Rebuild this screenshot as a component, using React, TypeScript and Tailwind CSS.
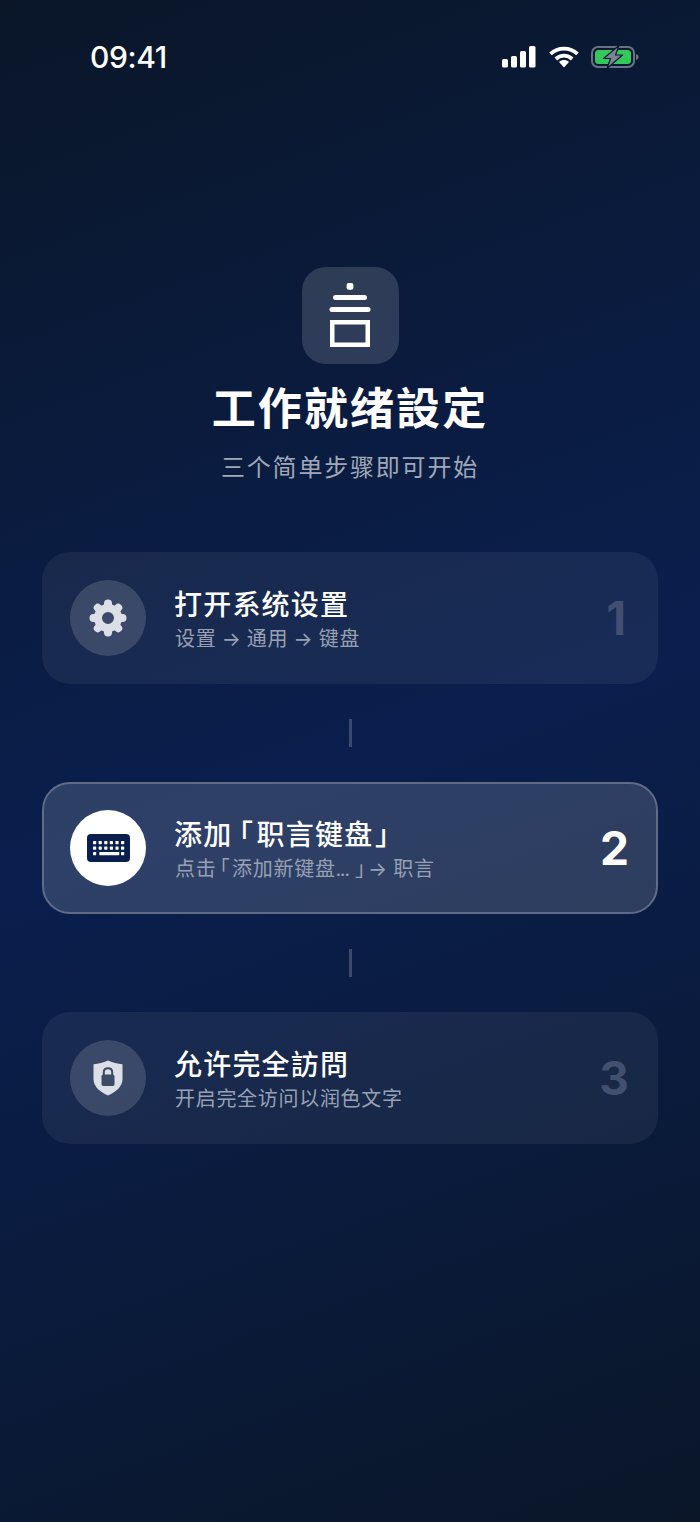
const SANS = "font-['Inter','Noto_Sans_CJK_SC',sans-serif]"

function StatusIcons() {
  return (
    <div className="flex items-center">
      <svg width="34" height="22" viewBox="0 0 34 22" fill="#fff">
        <rect x="0" y="13" width="6" height="8.5" rx="1.6" />
        <rect x="9" y="10" width="6" height="11.5" rx="1.6" />
        <rect x="18" y="5" width="6" height="16.5" rx="1.6" />
        <rect x="27" y="0" width="6.5" height="21.5" rx="1.6" />
      </svg>
      <svg className="ml-[13px]" width="30" height="22" viewBox="0 0 30 22" fill="none" stroke="#fff" strokeWidth="3.8">
        <path d="M1.500 7.800C9 .8 21 .8 28.500 7.800" />
        <path d="M6.800 13C11.500 8.600 18.500 8.600 23.200 13" />
        <path d="M10 16 15 21.500 20 16C17 13.400 13 13.400 10 16Z" fill="#fff" stroke="none" />
      </svg>
      <svg className="ml-[12px]" width="48" height="24" viewBox="0 0 48 24" fill="none">
        <rect x="1" y="2" width="42" height="20" rx="6" stroke="#6b7280" strokeWidth="2" />
        <rect x="4" y="5" width="36" height="14" rx="3.500" fill="#34c759" />
        <path d="M45 9c1.600.4 2.600 1.600 2.600 3s-1 2.600-2.600 3Z" fill="#6b7280" />
        <path d="M28 0.500 12.500 13.500h7L16 23.500 31.500 10h-7Z" fill="#7b8291" stroke="#0a1a38" strokeWidth="1.200" strokeLinejoin="round" />
      </svg>
    </div>
  )
}

function Logo() {
  return (
    <div className="w-[97px] h-[97px] rounded-[24px] bg-white/15 flex items-center justify-center">
      <svg width="42" height="66" viewBox="0 0 42 66" fill="#fff">
        <rect x="17.600" y="0" width="6.800" height="6.800" rx="2" />
        <rect x="4" y="12" width="34" height="5" rx="2.500" />
        <rect x="0.500" y="24" width="41" height="5" rx="2.500" />
        <path fillRule="evenodd" d="M1 37h40v27H1ZM5.500 41.500v18h31v-18Z" />
      </svg>
    </div>
  )
}

function GearIcon() {
  const angles = [0, 45, 90, 135, 180, 225, 270, 315]
  return (
    <svg width="38" height="38" viewBox="0 0 38 38" fill="none" stroke="#dcdfe6">
      <circle cx="19" cy="19" r="10" strokeWidth="8" />
      {angles.map((a) => (
        <line key={a} x1="19" y1="8" x2="19" y2="4.500" strokeWidth="8" strokeLinecap="round" transform={`rotate(${a} 19 19)`} />
      ))}
    </svg>
  )
}

function KeyboardIcon() {
  const rows = [7, 12.5]
  const cols = [6, 11.6, 17.2, 22.8, 28.4, 34]
  return (
    <svg width="43" height="28" viewBox="0 0 43 28" fill="#fff">
      <rect width="43" height="28" rx="4" fill="#0a1f4e" />
      {rows.flatMap((y) => cols.map((x) => <rect key={`${x}-${y}`} x={x} y={y} width="3.200" height="3.200" rx="0.6" />))}
      <rect x="6" y="18" width="3.200" height="3.200" rx="0.6" />
      <rect x="12.300" y="18" width="20" height="3.200" rx="0.6" />
      <rect x="34" y="18" width="3.200" height="3.200" rx="0.6" />
    </svg>
  )
}

function ShieldIcon() {
  return (
    <svg width="30" height="36" viewBox="0 0 30 36">
      <path d="M15 0.500C20 2.800 24.500 3.800 29.500 4.200V19C29.500 27 22 32.500 15 35.500 8 32.500 0.500 27 0.500 19V4.200C5.500 3.800 10 2.800 15 0.500Z" fill="#dcdfe6" />
      <rect x="8.500" y="14.500" width="13" height="11.500" rx="1.800" fill="#3c4967" />
      <path d="M10.800 15V12.200C10.800 9.700 12.600 8.200 15 8.200S19.200 9.700 19.200 12.200V15" fill="none" stroke="#3c4967" strokeWidth="2" />
    </svg>
  )
}

function Arrow() {
  return <span className="-mx-[1px]">→</span>
}

function StepCard({
  icon,
  title,
  sub,
  num,
  numClass,
  active,
}: {
  icon: React.ReactNode
  title: React.ReactNode
  sub: React.ReactNode
  num: string
  numClass?: string
  active?: boolean
}) {
  return (
    <div
      className={
        active
          ? "h-[132px] rounded-[28px] border-2 border-[#5f6b87] bg-white/15 flex items-center pl-[26px] pr-[27px]"
          : "h-[132px] rounded-[28px] border-2 border-transparent bg-white/[0.06] flex items-center pl-[26px] pr-[27px]"
      }
    >
      <div
        className={
          active
            ? "w-[76px] h-[76px] rounded-full bg-white flex items-center justify-center"
            : "w-[76px] h-[76px] rounded-full bg-white/15 flex items-center justify-center"
        }
      >
        {icon}
      </div>
      <div className="ml-[28px] pt-[3px] flex-1">
        <div className="text-[28px] leading-[36px] font-medium text-white tracking-[1.2px]">{title}</div>
        <div className="mt-[3px] ml-[1px] text-[20px] leading-[26px] text-[#98a1b3] tracking-[0.7px]">{sub}</div>
      </div>
      <div className={`text-[46px] font-bold ${active ? "text-white" : "text-[#414f70]"} ${numClass ?? ""}`}>{num}</div>
    </div>
  )
}

function Connector() {
  return <div className="w-[3px] h-[28px] bg-white/20 mx-auto my-[35px]" />
}

export default function App() {
  return (
    <div className={`${SANS} w-[700px] h-[1522px] overflow-hidden bg-[linear-gradient(160deg,#0a1628_0%,#0a1f4e_50%,#0a1628_100%)]`}>
      <div className="h-[114px] pl-[90px] pr-[61px] flex items-center justify-between">
        <span className="text-[30px] font-medium text-white tracking-[-0.4px]">09:41</span>
        <StatusIcons />
      </div>

      <div className="mt-[153px] flex flex-col items-center">
        <Logo />
        <h1 className="mt-[16px] text-[44px] leading-[58px] font-bold text-white tracking-[2.1px]">工作就绪設定</h1>
        <p className="mt-[14px] text-[24px] leading-[32px] text-[#a0a8b8] tracking-[1.8px]">三个简单步骤即可开始</p>
      </div>

      <div className="mt-[68px] px-[42px]">
        <StepCard
          icon={<GearIcon />}
          title="打开系统设置"
          sub={
            <>
              设置 <Arrow /> 通用 <Arrow /> 键盘
            </>
          }
          num="1"
          numClass="mr-[3px]"
        />
        <Connector />
        <StepCard
          icon={<KeyboardIcon />}
          title={
            <>
              添加
              <span className="[font-feature-settings:'palt'] ml-[6px] mr-[3px]">「</span>
              职言键盘
              <span className="[font-feature-settings:'palt'] ml-[2px]">」</span>
            </>
          }
          sub={
            <>
              点击
              <span className="[font-feature-settings:'palt'] ml-[3px] mr-[2px]">「</span>
              添加新键盘<span className="tracking-[-1.5px]">...</span>
              <span className="[font-feature-settings:'palt'] ml-[7px] mr-[3px]">」</span>
              <Arrow /> 职言
            </>
          }
          num="2"
          active
        />
        <Connector />
        <StepCard icon={<ShieldIcon />} title="允许完全訪問" sub="开启完全访问以润色文字" num="3" />
      </div>
    </div>
  )
}
